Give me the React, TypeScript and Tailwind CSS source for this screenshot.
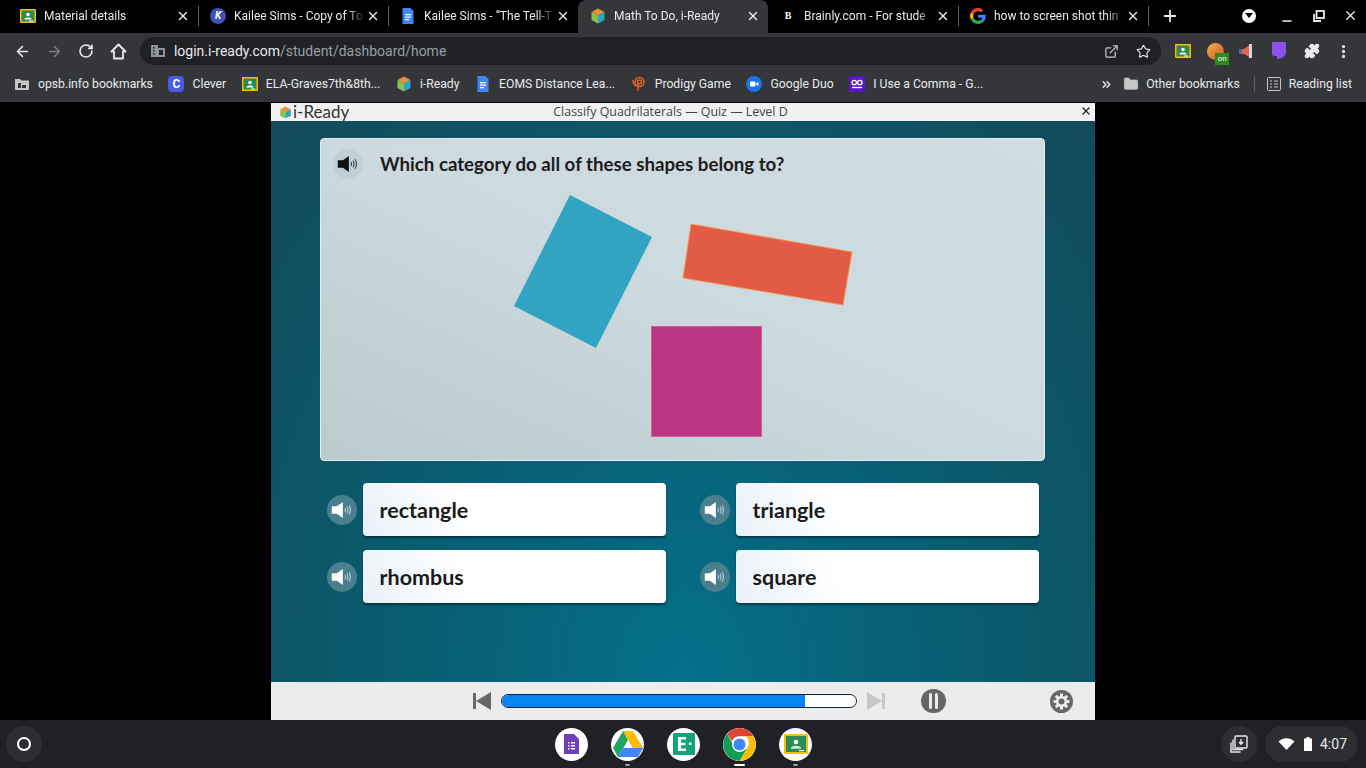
import { ArrowLeft, ArrowRight, RotateCw, Star, Puzzle, MoreVertical, Plus, X, Minus, ExternalLink, Folder, ChevronsRight } from "lucide-react"

function Classroom({ size = 16 }: { size?: number }) {
  return (
    <svg width={size} height={size} viewBox="0 0 16 16" className="shrink-0">
      <rect x="0" y="1" width="16" height="14" rx="1" fill="#fbbc04" />
      <rect x="1.5" y="2.5" width="13" height="11" fill="#2a8a52" />
      <circle cx="8" cy="6.5" r="1.8" fill="#fff" />
      <path d="M4.5 11c0-2 7-2 7 0v.5h-7z" fill="#fff" />
      <rect x="9" y="12.5" width="4" height="1" fill="#fff" />
    </svg>
  )
}

function Docs() {
  return (
    <svg width="16" height="16" viewBox="0 0 16 16" className="shrink-0">
      <path d="M2.5 0h8l3 3v13h-11z" fill="#4285f4" />
      <path d="M5 6h6v1.2H5zM5 8.5h6v1.2H5zM5 11h4v1.2H5z" fill="#fff" />
    </svg>
  )
}

function Cube({ size = 16 }: { size?: number }) {
  return (
    <svg width={size} height={size} viewBox="0 0 16 16" className="shrink-0">
      <path d="M8 0.5 14.5 4 8 7.5 1.5 4z" fill="#ef8f3a" />
      <path d="M1.5 4 8 7.5V15.5L1.5 12z" fill="#8bc34a" />
      <path d="M14.5 4 8 7.5V15.5L14.5 12z" fill="#2aa7c0" />
    </svg>
  )
}

function GoogleG() {
  return (
    <svg width="16" height="16" viewBox="0 0 48 48" className="shrink-0">
      <path fill="#EA4335" d="M24 9.5c3.5 0 6.700 1.200 9.200 3.600l6.900-6.900C35.900 2.400 30.500 0 24 0 14.600 0 6.500 5.400 2.600 13.200l8 6.200C12.500 13.700 17.800 9.500 24 9.500z" />
      <path fill="#4285F4" d="M46.900 24.500c0-1.600-.1-3.100-.4-4.500H24v9h12.900c-.6 3-2.200 5.500-4.700 7.200l7.700 6c4.500-4.200 7-10.300 7-17.700z" />
      <path fill="#FBBC05" d="M10.600 28.600c-.5-1.400-.8-3-.8-4.600s.3-3.200.8-4.600l-8-6.200C.9 16.500 0 20.100 0 24s.9 7.500 2.600 10.800z" />
      <path fill="#34A853" d="M24 48c6.500 0 11.900-2.100 15.900-5.800l-7.700-6c-2.200 1.400-4.900 2.300-8.200 2.300-6.200 0-11.500-4.200-13.400-9.900l-8 6.200C6.500 42.600 14.600 48 24 48z" />
    </svg>
  )
}

const tabs = [
  { title: "Material details", icon: <Classroom /> },
  {
    title: "Kailee Sims - Copy of To",
    icon: (
      <span className="flex h-4 w-4 shrink-0 items-center justify-center rounded-full bg-[#3f51b5] text-[10px] font-bold italic text-white">K</span>
    ),
  },
  { title: "Kailee Sims - “The Tell-T", icon: <Docs /> },
  { title: "Math To Do, i-Ready", icon: <Cube />, active: true },
  {
    title: "Brainly.com - For stude",
    icon: <span className="flex h-4 w-4 shrink-0 items-center justify-center font-['Liberation_Serif',serif] text-[10px] font-bold text-white">B</span>,
  },
  { title: "how to screen shot thin", icon: <GoogleG /> },
]

const leftBookmarks = [
  { label: "opsb.info bookmarks", icon: <FolderBuilding /> },
  {
    label: "Clever",
    icon: <span className="flex h-4 w-4 shrink-0 items-center justify-center rounded-sm bg-[#4a5be0] text-[12px] font-bold text-white">C</span>,
  },
  { label: "ELA-Graves7th&8th...", icon: <Classroom /> },
  { label: "i-Ready", icon: <Cube /> },
  { label: "EOMS Distance Lea...", icon: <Docs /> },
  {
    label: "Prodigy Game",
    icon: (
      <svg width="16" height="16" viewBox="0 0 16 16" fill="none" stroke="#e8622c" strokeWidth="1.4" className="shrink-0">
        <circle cx="8.500" cy="6" r="4.500" />
        <circle cx="8.500" cy="6" r="2" />
        <path d="M7 8v7M2 4c0 3 1 5 3 6" />
      </svg>
    ),
  },
  {
    label: "Google Duo",
    icon: (
      <svg width="16" height="16" viewBox="0 0 16 16" className="shrink-0">
        <circle cx="8" cy="8" r="8" fill="#1a73e8" />
        <rect x="4" y="5.500" width="5.500" height="5" rx="1" fill="#fff" />
        <path d="M10 7.500 12.500 6v4L10 8.500z" fill="#fff" />
      </svg>
    ),
  },
  {
    label: "I Use a Comma - G...",
    icon: (
      <svg width="16" height="16" viewBox="0 0 16 16" fill="none" className="shrink-0">
        <rect width="16" height="16" rx="1.500" fill="#5a19c9" />
        <circle cx="5.200" cy="6.500" r="2.200" stroke="#fff" strokeWidth="1.300" />
        <circle cx="10.800" cy="6.500" r="2.200" stroke="#fff" strokeWidth="1.300" />
        <path d="M3 11.500h10" stroke="#fff" strokeWidth="1.300" />
      </svg>
    ),
  },
]

function FolderBuilding() {
  return (
    <svg width="16" height="16" viewBox="0 0 16 16" className="shrink-0">
      <path d="M1 3h5l1.500 1.500H15V14H1z" fill="#c4c7c5" />
      <path d="M4 7h3v5H4zM8 9h4v3H8z" fill="#35363a" />
    </svg>
  )
}

function Speaker({ dark = false }: { dark?: boolean }) {
  const body = dark ? "#111" : "#fff"
  const wave = dark ? "#111" : "#dfeaee"
  return (
    <svg width="26" height="20" viewBox="0 0 26 20" fill="none">
      <path d="M1 5.500h6l7-5v19l-7-5H1z" fill={body} />
      <path d="M16.500 7.500c.8 1.500.8 3.500 0 5M19 6c1.300 2.500 1.300 5.500 0 8M21.500 4.500c1.800 3.500 1.800 7.500 0 11" stroke={wave} strokeWidth="1" />
    </svg>
  )
}

function Answer({ label }: { label: string }) {
  return (
    <div className="flex items-center gap-[6px]">
      <div className="flex h-[30px] w-[30px] items-center justify-center rounded-full bg-[#4a7f8e]">
        <div className="flex scale-[0.85] items-center justify-center">
          <Speaker />
        </div>
      </div>
      <div className="flex h-[53px] w-[303px] items-center rounded-sm bg-[linear-gradient(70deg,#e9f0f7_0%,#ffffff_35%)] pl-[17px] pt-px font-['Lato',sans-serif] text-[21.500px] font-bold text-[#1a1a1a] shadow-[0_2px_2px_rgba(0,30,40,0.6)]">
        {label}
      </div>
    </div>
  )
}

function ShelfIcon({ children, dot }: { children: React.ReactNode; dot?: "long" | "short" }) {
  return (
    <div className="relative flex h-[33px] w-[33px] items-center justify-center rounded-full bg-white">
      {children}
      {dot === "long" && <span className="absolute bottom-[-5px] left-[11px] h-[2px] w-[11px] rounded-full bg-white" />}
      {dot === "short" && <span className="absolute bottom-[-5px] left-[14px] h-[2px] w-[5px] rounded-full bg-[#9aa0a6]" />}
    </div>
  )
}

const gearTeeth = [0, 45, 90, 135, 180, 225, 270, 315]

export default function App() {
  return (
    <div className="flex h-[768px] w-[1366px] flex-col overflow-hidden bg-black font-['Roboto',sans-serif] text-[12px] text-[#e8eaed]">
      {/* tab strip */}
      <div className="flex h-[33px] shrink-0 items-stretch bg-black pb-[2px] pl-[8px]">
        {tabs.map((t, i) => (
          <div
            key={t.title}
            className={
              t.active
                ? "mb-[-2px] flex w-[190px] items-center rounded-t-lg bg-[#35363a] pb-[2px] pl-[12px] pr-[8px]"
                : "flex w-[190px] items-center pl-[12px] pr-[8px]"
            }
          >
            {t.icon}
            <span className="ml-[8px] min-w-0 flex-1 overflow-hidden whitespace-nowrap text-[12px] text-[#e8eaed] [mask-image:linear-gradient(to_right,black_85%,transparent)]">
              {t.title}
            </span>
            <X size={14} strokeWidth={2.4} className="shrink-0 text-[#e8eaed]" />
            {!t.active && i !== 2 && <span className="ml-[8px] mr-[-9px] h-[20px] w-px bg-[#5f6368]" />}
          </div>
        ))}
        <div className="ml-[13px] flex items-center">
          <Plus size={18} strokeWidth={2.4} />
        </div>
        <div className="ml-auto flex items-center pr-[8px]">
          <div className="flex h-[14px] w-[14px] items-center justify-center rounded-full bg-white">
            <span className="h-0 w-0 border-x-[4px] border-t-[5px] border-x-transparent border-t-black" />
          </div>
          <Minus size={14} strokeWidth={2.4} className="ml-[24px] mt-[10px]" />
          <svg width="12" height="12" viewBox="0 0 12 12" fill="none" stroke="#e8eaed" strokeWidth="1.8" className="ml-[19px]">
            <rect x="3.500" y="1" width="7.500" height="7" />
            <path d="M1 4v7h7" />
          </svg>
          <X size={15} strokeWidth={2.2} className="ml-[18px]" />
        </div>
      </div>

      {/* toolbar */}
      <div className="flex h-[35px] shrink-0 items-center bg-[#35363a] pl-[14px] pr-[14px] pt-px">
        <ArrowLeft size={17} strokeWidth={2.2} />
        <ArrowRight size={17} strokeWidth={2.2} className="ml-[15px] text-[#7d8084]" />
        <RotateCw size={16} strokeWidth={2.4} className="ml-[15px]" />
        <svg width="17" height="17" viewBox="0 0 17 17" fill="none" stroke="#e8eaed" strokeWidth="1.800" className="ml-[16px]">
          <path d="M8.500 1.500 1.500 8.500h2.500v7h9v-7h2.500z" strokeLinejoin="round" />
        </svg>
        <div className="ml-[13px] flex h-[28px] w-[1022px] items-center rounded-full bg-[#202124] pl-[11px] pr-[10px]">
          <svg width="14" height="12" viewBox="0 0 14 12" className="shrink-0">
            <path d="M0 0h7v3h7v9H0z" fill="#8f9296" />
            <path d="M2 2h1.500v1.500H2zM2 5h1.500v1.500H2zM2 8h1.500v1.500H2zM8 5h4v5H8z" fill="#202124" />
          </svg>
          <span className="ml-[9px] text-[14px] text-[#e8eaed]">
            login.i-ready.com<span className="text-[#9aa0a6]">/student/dashboard/home</span>
          </span>
          <ExternalLink size={15} className="ml-auto text-[#c4c7c5]" />
          <Star size={15} strokeWidth={1.8} className="ml-[17px] text-[#e8eaed]" />
        </div>
        <div className="ml-[14px]">
          <Classroom size={16} />
        </div>
        <div className="relative ml-[16px] h-[17px] w-[17px] rounded-full bg-gradient-to-br from-[#f6b24a] to-[#c94f2a]">
          <span className="absolute left-[8px] top-[10px] flex h-[12px] w-[14px] items-center justify-center bg-[#2c8a1e] text-[8px] leading-none text-white">on</span>
        </div>
        <svg width="14" height="16" viewBox="0 0 14 16" className="ml-[15px]">
          <path d="M0 6h5l7-5v14l-7-4H0z" fill="#e8644a" />
          <rect x="10" y="1" width="3" height="14" fill="#d8d8d8" />
          <rect x="0" y="6" width="3" height="5" fill="#3f6fb5" />
        </svg>
        <svg width="14" height="18" viewBox="0 0 14 18" className="ml-[19px]">
          <path d="M0 0h14v10c0 4-4 7-9 7v-3H2c-1 0-2-1-2-2z" fill="#8a52e8" />
        </svg>
        <Puzzle size={16} fill="#e8eaed" className="ml-[18px]" />
        <MoreVertical size={17} strokeWidth={2.6} className="ml-[15px]" />
      </div>

      {/* bookmarks */}
      <div className="flex h-[34px] shrink-0 items-center bg-[#35363a] pb-[2px] pl-[14px] pr-[14px] text-[12.200px]">
        {leftBookmarks.map((b) => (
          <div key={b.label} className="mr-[15.600px] flex items-center gap-[8px] whitespace-nowrap">
            {b.icon}
            <span>{b.label}</span>
          </div>
        ))}
        <ChevronsRight size={13} strokeWidth={2.6} className="ml-auto" />
        <Folder size={16} fill="#c4c7c5" strokeWidth={1} className="ml-[10px] text-[#c4c7c5]" />
        <span className="ml-[7px]">Other bookmarks</span>
        <span className="ml-[14px] h-[16px] w-px bg-[#5f6368]" />
        <svg width="14" height="14" viewBox="0 0 14 14" fill="none" stroke="#c4c7c5" className="ml-[12px]">
          <rect x="0.500" y="0.500" width="13" height="13" rx="1" />
          <path d="M3 4h2M3 7h2M3 10h2M7 4h4M7 7h4M7 10h4" />
        </svg>
        <span className="ml-[8px]">Reading list</span>
      </div>

      {/* lesson player */}
      <div className="flex min-h-0 flex-1 justify-center pt-px">
        <div className="flex w-[824px] flex-col">
          <div className="relative flex h-[18px] shrink-0 items-center justify-center bg-[#f1f1f1] pr-[25px] font-['Open_Sans',sans-serif] text-[12.400px] text-[#444]">
            <div className="absolute left-[8px] top-0 flex h-full items-center gap-px">
              <Cube size={13} />
              <span className="mt-[-2px] font-['Lato',sans-serif] text-[17px] leading-none text-[#333]">i-Ready</span>
            </div>
            <span>Classify Quadrilaterals — Quiz — Level D</span>
            <X size={12} strokeWidth={2.6} className="absolute right-[3px] top-[2px] text-[#222]" />
          </div>

          <div className="flex min-h-0 flex-1 flex-col items-center bg-[radial-gradient(ellipse_at_50%_100%,#03708a_0%,#0a5a6d_55%,#124a59_100%)] pt-[17px]">
            <div className="relative mr-px h-[323px] w-[725px] rounded-[4px] border border-[#e4edf0] bg-gradient-to-tr from-[#bbcacd] via-[#ccd9de] to-[#cfdce1]">
              <div className="flex items-center pl-[12px] pt-[10px]">
                <div className="flex h-[30px] w-[30px] items-center justify-center rounded-full bg-[#bed0d8]">
                  <div className="flex scale-[0.85] items-center justify-center">
                    <Speaker dark />
                  </div>
                </div>
                <span className="ml-[17px] font-['Lato',sans-serif] text-[18.700px] font-bold text-[#1c1c1c]">
                  Which category do all of these shapes belong to?
                </span>
              </div>
              <svg width="725" height="323" viewBox="0 0 725 323" className="absolute left-0 top-0">
                <polygon points="249,56 331,98 275,209 193,167" fill="#31a4c4" />
                <polygon points="370,85 531,113 522,166 362,139" fill="#e25b47" stroke="#f09a52" strokeWidth="1" />
                <rect x="330.500" y="187.500" width="110" height="110" fill="#bc3580" stroke="#d85a9a" strokeWidth="1" />
              </svg>
            </div>

            <div className="mt-[22px] grid w-[713px] grid-cols-2 gap-x-[33px] gap-y-[14px]">
              <Answer label="rectangle" />
              <Answer label="triangle" />
              <Answer label="rhombus" />
              <Answer label="square" />
            </div>
          </div>

          <div className="flex h-[38px] shrink-0 items-center bg-[#ececec] pl-[202px]">
            <svg width="18" height="18" viewBox="0 0 18 18" fill="#666">
              <path d="M0 1h3v16H0zM18 0v18L3 9z" />
            </svg>
            <div className="ml-[10px] h-[14px] w-[356px] overflow-hidden rounded-full border border-[#0a2540] bg-white">
              <div className="h-full w-[85.5%] bg-[#0584f2]" />
            </div>
            <svg width="18" height="18" viewBox="0 0 18 18" fill="#c8c8c8" className="ml-[10px]">
              <path d="M15 1h3v16h-3zM0 0v18l15-9z" />
            </svg>
            <div className="ml-[36px] flex h-[24px] w-[25px] items-center justify-center gap-[3px] rounded-full bg-[#666]">
              <span className="h-[16px] w-[3px] rounded-full bg-[#ececec]" />
              <span className="h-[16px] w-[3px] rounded-full bg-[#ececec]" />
            </div>
            <svg width="23" height="23" viewBox="0 0 23 23" className="ml-[104px]">
              <circle cx="11.500" cy="11.500" r="11.500" fill="#666" />
              {gearTeeth.map((a) => (
                <rect key={a} x="10" y="3.500" width="3" height="4" fill="#ececec" transform={`rotate(${a} 11.500 11.500)`} />
              ))}
              <circle cx="11.500" cy="11.500" r="5.500" fill="#ececec" />
              <circle cx="11.500" cy="11.500" r="3" fill="#666" />
            </svg>
          </div>
        </div>
      </div>

      {/* chromeos shelf */}
      <div className="relative flex h-[48px] shrink-0 items-center bg-[#202124] pl-[6px] pr-[8px]">
        <div className="flex h-[36px] w-[36px] items-center justify-center rounded-full bg-[#2d2e31]">
          <span className="h-[14px] w-[14px] rounded-full border-[2.500px] border-white" />
        </div>
        <div className="ml-[513px] flex gap-[23px]">
          <ShelfIcon>
            <svg width="15" height="20" viewBox="0 0 15 20">
              <path d="M0 0h10l5 5v15H0z" fill="#6e3fb8" />
              <path d="M4 8h1.500v1.500H4zM7 8h4v1.500H7zM4 11h1.500v1.500H4zM7 11h4v1.500H7zM4 14h1.500v1.500H4zM7 14h4v1.500H7z" fill="#fff" />
            </svg>
          </ShelfIcon>
          <ShelfIcon dot="short">
            <svg width="30" height="26" viewBox="0 0 30 26">
              <path d="M10 0h10l10 17-5 9z" fill="#fbbc04" />
              <path d="M10 0 0 17l5 9 10-17z" fill="#1fa463" />
              <path d="M5 26h20l5-9H10z" fill="#4285f4" />
            </svg>
          </ShelfIcon>
          <ShelfIcon>
            <svg width="22" height="22" viewBox="0 0 22 22">
              <rect width="22" height="22" rx="1" fill="#12a37a" />
              <path d="M5 4h8v2.500H8v3.200h4.500v2.500H8v3.300h5V18H5z" fill="#fff" />
              <rect x="16" y="9.500" width="2.500" height="2.500" fill="#fff" />
            </svg>
          </ShelfIcon>
          <ShelfIcon dot="long">
            <svg width="33" height="33" viewBox="0 0 33 33" className="rounded-full">
              <path d="M16.500 0a16.500 16.500 0 0 1 14.300 8.250H16.500a8.250 8.250 0 0 0-7.500 4.800L4.200 6A16.500 16.500 0 0 1 16.500 0z" fill="#db4437" />
              <path d="M30.800 8.250A16.500 16.500 0 0 1 16.500 33l7.150-12.400a8.250 8.250 0 0 0-1-12.350z" fill="#fbbc05" />
              <path d="M16.500 33A16.500 16.500 0 0 1 4.200 6l7.150 12.400a8.250 8.250 0 0 0 12.300 2.200z" fill="#0f9d58" />
              <circle cx="16.500" cy="16.500" r="7.500" fill="#fff" />
              <circle cx="16.500" cy="16.500" r="6" fill="#4285f4" />
            </svg>
          </ShelfIcon>
          <ShelfIcon dot="short">
            <svg width="24" height="20" viewBox="0 0 24 20">
              <rect width="24" height="20" rx="1" fill="#f4c20d" />
              <rect x="2" y="2" width="20" height="16" fill="#2e8b57" />
              <circle cx="12" cy="8" r="2.200" fill="#fff" />
              <path d="M7 14c0-3 10-3 10 0v.8H7z" fill="#cfe8d8" />
              <rect x="15" y="16" width="5" height="1.200" fill="#fff" />
            </svg>
          </ShelfIcon>
        </div>
        <div className="ml-auto flex items-center gap-[8px]">
          <div className="flex h-[36px] w-[36px] items-center justify-center rounded-full bg-[#2d2e31]">
            <svg width="18" height="18" viewBox="0 0 18 18" fill="none" stroke="#e8eaed" strokeWidth="1.400">
              <rect x="5" y="1" width="12" height="12" rx="1" />
              <path d="M3 4.500v10h10M1 7.500v9.500h9.500" />
              <path d="M11 4v5M8.800 7l2.200 2.200L13.200 7" />
            </svg>
          </div>
          <div className="flex h-[36px] w-[93px] items-center rounded-full bg-[#2d2e31] pl-[13px] text-[14px] text-[#e8eaed]">
            <svg width="17" height="12" viewBox="0 0 16 12" fill="#fff">
              <path d="M0 3.500C4.500-1 11.500-1 16 3.500L8 12z" />
            </svg>
            <svg width="8" height="14" viewBox="0 0 8 14" fill="#fff" className="ml-[9px]">
              <path d="M2.500 0h3v1.500H8V14H0V1.500h2.500z" />
            </svg>
            <span className="ml-[8px]">4:07</span>
          </div>
        </div>
      </div>
    </div>
  )
}
